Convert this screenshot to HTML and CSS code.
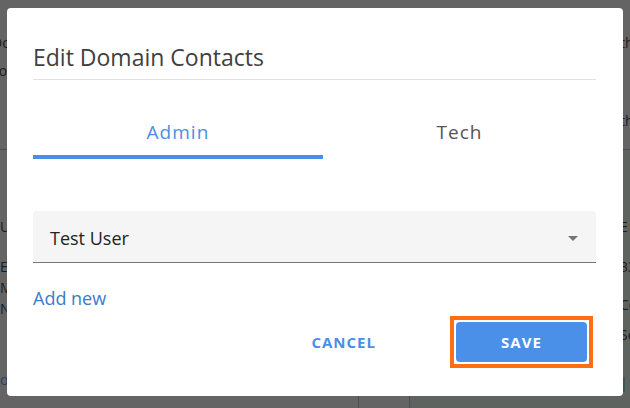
FILE: index.html
```html
<!DOCTYPE html>
<html lang="en">
<head>
<meta charset="utf-8">
<title>Edit Domain Contacts</title>
<link rel="stylesheet" href="styles.css">
</head>
<body>
<div class="page">
  <div class="page-top">
    <div class="frag-col left-col">
      <div class="frag ft1">Do</div>
      <div class="frag ft2">co</div>
    </div>
    <div class="frag-col right-col">
      <div class="frag ft1">th<span class="accent">e</span></div>
      <div class="frag ft3">th</div>
    </div>
  </div>
  <div class="page-body">
    <div class="cell cell-a">
      <div class="frag fb1">User</div>
      <div class="frag fb2">EXP</div>
      <div class="frag">Mar</div>
      <div class="frag">Nov</div>
      <div class="frag fb5 link">o <span class="accent">3</span></div>
    </div>
    <div class="cell cell-b"></div>
    <div class="cell cell-c">
      <div class="frag-col right-col">
        <div class="frag fb1">E<span class="accent">x</span></div>
        <div class="frag fb2">33</div>
        <div class="frag fr3">Co</div>
        <div class="frag fr4">Se</div>
        <div class="frag fr5 link">|</div>
      </div>
    </div>
  </div>
</div>

<div class="dialog" role="dialog" aria-labelledby="dlg-title">
  <h2 class="dialog-title" id="dlg-title">Edit Domain Contacts</h2>
  <div class="tabs">
    <button class="tab tab-active">Admin</button>
    <button class="tab">Tech</button>
  </div>
  <div class="select">
    <span class="select-value">Test User</span>
    <span class="select-arrow"></span>
  </div>
  <a class="add-new" href="#">Add new</a>
  <div class="actions">
    <button class="btn btn-text">CANCEL</button>
    <span class="focus-ring"><button class="btn btn-primary">SAVE</button></span>
  </div>
</div>
</body>
</html>
```

FILE: styles.css
```css
* { box-sizing: border-box; }

html, body {
  margin: 0;
  padding: 0;
}

body {
  width: 630px;
  height: 408px;
  overflow: hidden;
  background: #646464;
  font-family: "Open Sans", "DejaVu Sans", sans-serif;
  position: relative;
}

/* dimmed page behind the dialog */
.page {
  display: grid;
  grid-template-rows: 150px 1fr;
  height: 408px;
}

.page-top {
  display: flex;
  justify-content: space-between;
  border-bottom: 1px solid #4c4c4c;
  padding-top: 32px;
}

.frag-col {
  display: flex;
  flex-direction: column;
}

.left-col { margin-left: -8px; }
.right-col { width: 10px; white-space: nowrap; }

.frag {
  font-size: 14px;
  line-height: 21px;
  color: #1c1c22;
  white-space: nowrap;
}

.accent { color: #7a5a2a; }
.link { color: #24406a; }

.ft2 { margin-top: 7px; }
.ft3 { margin-top: 57px; }

.page-body {
  display: grid;
  grid-template-columns: 358px 51px 1fr;
}

.cell {
  padding-top: 66px;
}

.cell-b { border-left: 1px solid #4e4e4e; }
.cell-c {
  border-left: 1px solid #4e4e4e;
  background: #5f635f;
  display: flex;
  justify-content: flex-end;
}

.fb2 { margin-top: 19px; }
.fb5 { margin-top: 50px; }
.fr3 { margin-top: 17px; }
.fr4 { margin-top: 9px; }
.fr5 { margin-top: 27px; }

/* dialog */
.dialog {
  position: absolute;
  left: 7px;
  top: 8px;
  width: 616px;
  height: 388px;
  background: #ffffff;
  border-radius: 4px;
  padding: 0 27px 0 26px;
  display: flex;
  flex-direction: column;
}

.dialog-title {
  margin: 0;
  padding: 34px 0 7px;
  font-size: 23px;
  line-height: 30px;
  font-weight: 400;
  color: #404040;
  border-bottom: 1px solid #e2e2e2;
}

.tabs {
  display: flex;
}

.tab {
  flex: 1 1 auto;
  border: 0;
  background: none;
  font-family: "Open Sans", "DejaVu Sans", sans-serif;
  font-size: 19px;
  line-height: 24px;
  letter-spacing: 1px;
  color: #555555;
  padding: 40px 0 11px;
  border-bottom: 4px solid transparent;
  cursor: pointer;
}

.tab-active {
  color: #4a8fe7;
  font-weight: 500;
  border-bottom-color: #4a8fe7;
}

.select {
  margin-top: 52px;
  height: 52px;
  background: #f5f5f5;
  border-radius: 4px 4px 0 0;
  border-bottom: 1px solid #777777;
  padding: 15px 18px 0 17px;
  display: flex;
  justify-content: space-between;
}

.select-value {
  font-size: 18px;
  line-height: 24px;
  color: #222222;
}

.select-arrow {
  width: 0;
  height: 0;
  margin-top: 10px;
  border-left: 5px solid transparent;
  border-right: 5px solid transparent;
  border-top: 5px solid #757575;
}

.add-new {
  margin-top: 23px;
  align-self: flex-start;
  font-size: 18px;
  line-height: 24px;
  color: #3b7bcc;
  text-decoration: none;
}

.actions {
  margin-top: 6px;
  display: flex;
  justify-content: flex-end;
  align-items: center;
  gap: 58px;
  padding-right: 3px;
}

.btn {
  font-family: "Open Sans", "DejaVu Sans", sans-serif;
  font-size: 15px;
  font-weight: 700;
  letter-spacing: 1px;
  height: 40px;
  border: 0;
  border-radius: 4px;
  cursor: pointer;
}

.btn-text {
  background: none;
  color: #4a8fe7;
  padding: 0 16px;
}

.focus-ring {
  display: flex;
  border: 4px solid #ff6d14;
  padding: 2px;
  background: #ffffff;
}

.btn-primary {
  width: 131px;
  background: #4a90e8;
  color: #ffffff;
}
```
